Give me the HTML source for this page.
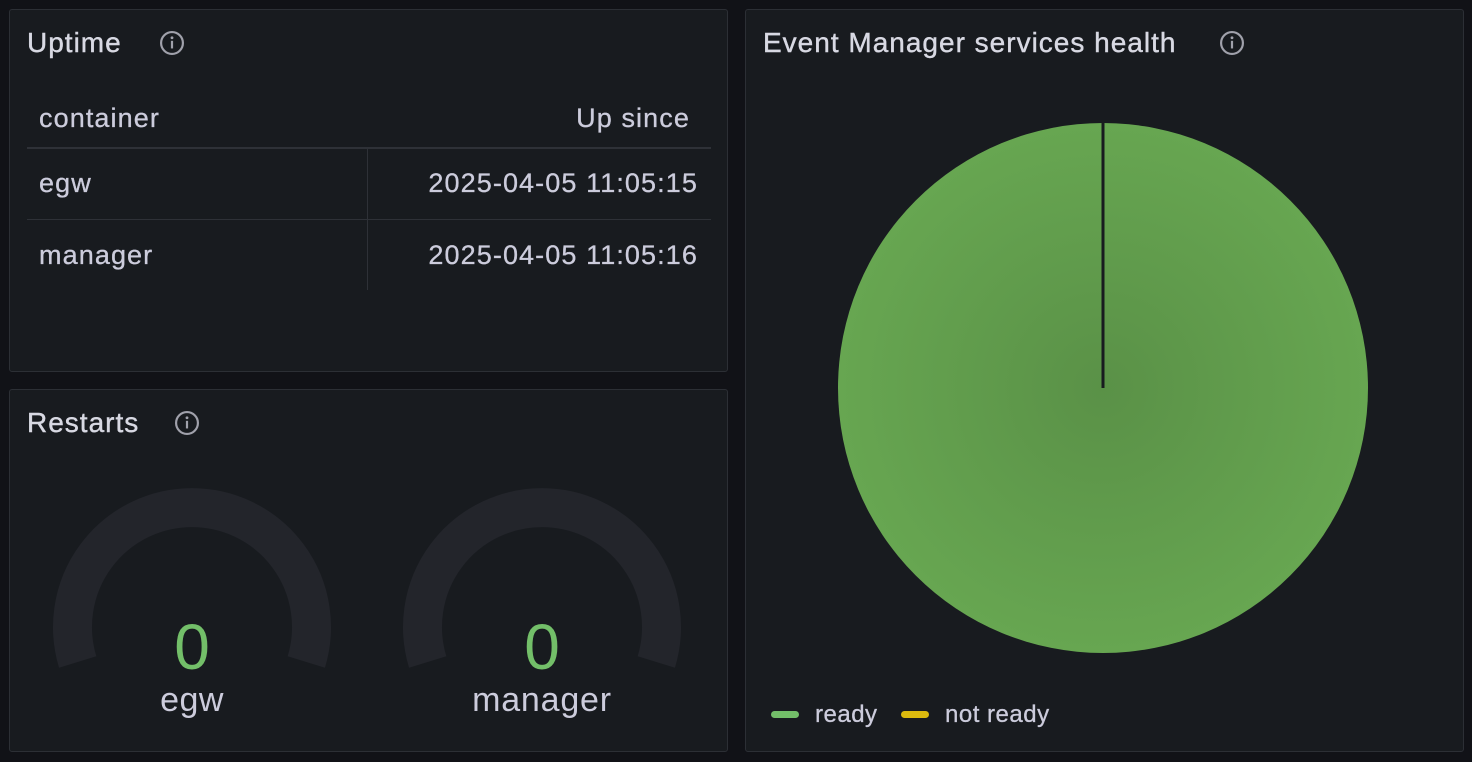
<!DOCTYPE html>
<html><head><style>
body{margin:0;width:1472px;height:762px;background:#111217;font-family:"Liberation Sans",sans-serif;color:#ccccdc;position:relative;overflow:hidden}
.p{position:absolute;background:#181b1f;border:1px solid #2c2f35;border-radius:3px;box-sizing:border-box}
.t{position:absolute;font-size:28px;top:17px;left:17px;color:#d8d9e3;letter-spacing:1px;-webkit-text-stroke:0.4px #d8d9e3}
.i{position:absolute;top:21px;width:24px;height:24px}
.c{position:absolute;font-size:27px;letter-spacing:1.1px;-webkit-text-stroke:0.3px #ccccdc}
</style></head><body>
<div class="p" style="left:9px;top:9px;width:719px;height:363px">
<div class="t">Uptime</div>
<svg class="i" style="left:150px" viewBox="0 0 22 22"><circle cx="11" cy="11" r="10" fill="none" stroke="#a0a1ab" stroke-width="2"/><rect x="10" y="9" width="2" height="7" fill="#a0a1ab"/><circle cx="11" cy="6.2" r="1.3" fill="#a0a1ab"/></svg>
<div class="c" style="left:29px;top:93px">container</div>
<div class="c" style="right:37px;top:93px">Up since</div>
<div style="position:absolute;left:17px;top:137px;width:684px;height:2px;background:#2e3137"></div>
<div style="position:absolute;left:17px;top:209px;width:684px;height:1px;background:#2e3137"></div>
<div style="position:absolute;left:357px;top:139px;width:1px;height:141px;background:#2e3137"></div>
<div class="c" style="left:29px;top:158px">egw</div>
<div class="c" style="right:29px;top:158px">2025-04-05 11:05:15</div>
<div class="c" style="left:29px;top:230px">manager</div>
<div class="c" style="right:29px;top:230px">2025-04-05 11:05:16</div>
</div>
<div class="p" style="left:9px;top:389px;width:719px;height:363px">
<div class="t">Restarts</div>
<svg class="i" style="left:165px" viewBox="0 0 22 22"><circle cx="11" cy="11" r="10" fill="none" stroke="#a0a1ab" stroke-width="2"/><rect x="10" y="9" width="2" height="7" fill="#a0a1ab"/><circle cx="11" cy="6.2" r="1.3" fill="#a0a1ab"/></svg>
</div>
<svg style="position:absolute;left:0;top:0" width="740" height="762">
<g fill="none" stroke="#23252b" stroke-width="39">
<path d="M 77.7 662 A 119.5 119.5 0 1 1 306.3 662"/>
<path d="M 427.7 662 A 119.5 119.5 0 1 1 656.3 662"/>
</g>
<g font-family="Liberation Sans,sans-serif" text-anchor="middle">
<text x="192" y="669" font-size="64" fill="#73bf69">0</text>
<text x="542" y="669" font-size="64" fill="#73bf69">0</text>
<text x="192" y="711" font-size="34" fill="#ccccdc" letter-spacing="0.5">egw</text>
<text x="542" y="711" font-size="34" fill="#ccccdc" letter-spacing="0.8">manager</text>
</g>
</svg>
<div class="p" style="left:745px;top:9px;width:719px;height:743px">
<div class="t">Event Manager services health</div>
<svg class="i" style="left:474px" viewBox="0 0 22 22"><circle cx="11" cy="11" r="10" fill="none" stroke="#a0a1ab" stroke-width="2"/><rect x="10" y="9" width="2" height="7" fill="#a0a1ab"/><circle cx="11" cy="6.2" r="1.3" fill="#a0a1ab"/></svg>
<div style="position:absolute;left:25px;top:701px;width:28px;height:7px;border-radius:4px;background:#73bf69"></div>
<div class="c" style="left:69px;top:691px;font-size:24px;letter-spacing:0.5px">ready</div>
<div style="position:absolute;left:155px;top:701px;width:28px;height:7px;border-radius:4px;background:#f2cc0c;opacity:.9"></div>
<div class="c" style="left:199px;top:691px;font-size:24px;letter-spacing:0.5px">not ready</div>
</div>
<svg style="position:absolute;left:830px;top:115px" width="546" height="546">
<defs><radialGradient id="g"><stop offset="0" stop-color="#5a9147"/><stop offset="1" stop-color="#67a651"/></radialGradient></defs>
<circle cx="273" cy="273" r="265" fill="url(#g)"/>
<line x1="273" y1="6" x2="273" y2="273" stroke="#181b1f" stroke-width="3"/>
</svg>
</body></html>
